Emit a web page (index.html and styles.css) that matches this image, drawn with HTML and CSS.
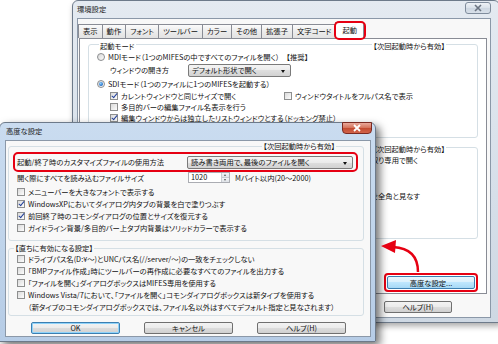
FILE: index.html
```html
<!DOCTYPE html>
<html lang="ja">
<head>
    <meta charset="UTF-8">
    <meta name="viewport" content="width=device-width, initial-scale=1.0">
    <title>高度な設定</title>
    <link rel="stylesheet" href="styles.css">
</head>
<body>
    <!-- 環境設定 (behind) -->
    <div class="window back-win">
        <div class="titlebar">
            <span class="title">環境設定</span>
            <span class="close-btn">
                <svg viewBox="0 0 10 8" width="10" height="8"><path d="M2 1L8 7M8 1L2 7" /></svg>
            </span>
        </div>
        <div class="client">
            <div class="tabs">
                <span class="tab">表示</span>
                <span class="tab">動作</span>
                <span class="tab">フォント</span>
                <span class="tab">ツールバー</span>
                <span class="tab">カラー</span>
                <span class="tab">その他</span>
                <span class="tab">拡張子</span>
                <span class="tab">文字コード</span>
                <span class="tab active marked">起動</span>
            </div>
            <div class="panel">
                <div class="group back-mode">
                    <div class="group-head">
                        <span class="legend">起動モード</span>
                        <span class="legend legend-right">【次回起動時から有効】</span>
                    </div>
                    <div class="row row-radio"><span class="radio"></span>MDIモード（1つのMIFESの中ですべてのファイルを開く）<span class="gap"></span>【推奨】</div>
                    <div class="row row-combo sub">
                        <span class="label-open">ウィンドウの開き方</span>
                        <span class="combo combo-open">デフォルト形状で開く</span>
                    </div>
                    <div class="row row-radio2"><span class="radio on"></span>SDIモード（1つのファイルに1つのMIFESを起動する）</div>
                    <div class="row row-check sub">
                        <span class="check-item"><span class="cb on"></span>カレントウィンドウと同じサイズで開く</span>
                        <span class="cb"></span>ウィンドウタイトルをフルパス名で表示
                    </div>
                    <div class="row row-check sub"><span class="cb"></span>多目的バーの編集ファイル名表示を行う</div>
                    <div class="row row-check sub"><span class="cb on"></span>編集ウィンドウからは独立したリストウィンドウとする（ドッキング禁止）</div>
                </div>

                <div class="group back-open">
                    <div class="group-head">
                        <span class="legend legend-right">【次回起動時から有効】</span>
                    </div>
                    <div class="row tail">編集中のファイルは読み取り専用で開く</div>
                    <div class="row tail tail-4">曖昧な幅の文字を全角と見なす</div>
                </div>

                <span class="hilite">
                    <button class="btn btn-hover">高度な設定...</button>
                </span>
            </div>
            <div class="foot">
                <button class="btn btn-help">ヘルプ(H)</button>
            </div>
        </div>
    </div>

    <!-- 高度な設定 (front) -->
    <div class="window front-win">
        <div class="titlebar">
            <span class="title">高度な設定</span>
            <span class="close-btn red">
                <svg viewBox="0 0 10 8" width="10" height="8"><path d="M2 1L8 7M8 1L2 7" /></svg>
            </span>
        </div>
        <div class="client">
            <div class="group front-next">
                <div class="group-head">
                    <span class="legend legend-right">【次回起動時から有効】</span>
                </div>
                <div class="hilite-row">
                    <div class="row row-combo">
                        <span class="label-grow">起動/終了時のカスタマイズファイルの使用方法</span>
                        <span class="combo combo-custom">読み書き両用で、最後のファイルを開く</span>
                    </div>
                </div>
                <div class="row row-size">
                    <span class="label-size">開く際にすべてを読み込むファイルサイズ</span>
                    <span class="spin">
                        <span class="spin-value">1020</span>
                        <span class="spin-btns"><i class="up"></i><i class="down"></i></span>
                    </span>
                    <span class="unit">Mバイト以内(20～2000)</span>
                </div>
                <div class="row row-check first"><span class="cb"></span>メニューバーを大きなフォントで表示する</div>
                <div class="row row-check"><span class="cb on"></span>WindowsXPにおいてダイアログ内タブの背景を白で塗りつぶす</div>
                <div class="row row-check"><span class="cb on"></span>前回終了時のコモンダイアログの位置とサイズを復元する</div>
                <div class="row row-check"><span class="cb"></span>ガイドライン背景/多目的バー上タブ内背景はソリッドカラーで表示する</div>
            </div>

            <div class="group front-now">
                <div class="group-head">
                    <span class="legend">【直ちに有効になる設定】</span>
                </div>
                <div class="row row-check"><span class="cb"></span>ドライブパス名(D:¥～)とUNCパス名(//server/～)の一致をチェックしない</div>
                <div class="row row-check"><span class="cb"></span>「BMPファイル作成」時にツールバーの再作成に必要なすべてのファイルを出力する</div>
                <div class="row row-check"><span class="cb"></span>「ファイルを開く」ダイアログボックスはMIFES専用を使用する</div>
                <div class="row row-check"><span class="cb"></span>Windows Vista/7において、「ファイルを開く」コモンダイアログボックスは新タイプを使用する</div>
                <div class="row row-check note">（新タイプのコモンダイアログボックスでは、ファイル名以外はすべてデフォルト指定と見なされます）</div>
            </div>

            <div class="buttons">
                <button class="btn btn-default">OK</button>
                <button class="btn">キャンセル</button>
                <button class="btn">ヘルプ(H)</button>
            </div>
        </div>
    </div>

    <svg class="arrow" viewBox="0 0 498 344" width="498" height="344">
        <path class="arrow-line" d="M418 272 C418 257 411 248 393 247" />
        <polygon class="arrow-head" points="381,246 396,240 395,253" />
    </svg>
</body>
</html>
```

FILE: styles.css
```css
* {
    box-sizing: border-box;
}

body {
    margin: 0;
    width: 498px;
    height: 344px;
    overflow: hidden;
    position: relative;
    background: #fff;
    font-family: "Noto Sans CJK JP", "Noto Sans", sans-serif;
    font-size: 7.3px;
    font-feature-settings: "palt";
    color: #111;
    white-space: nowrap;
}

/* windows */
.window {
    position: absolute;
    display: flex;
    flex-direction: column;
    border: 1px solid #6d7a8a;
    border-radius: 6px 6px 0 0;
}

.back-win {
    left: 72px;
    top: 0;
    width: 428px;
    height: 323px;
    background: linear-gradient(#e4eaf1, #d6dfe9 60%, #ced8e3);
    box-shadow: 2px 3px 6px rgba(0, 0, 0, 0.35);
}

.front-win {
    left: -1px;
    top: 122px;
    width: 377px;
    height: 220px;
    background: linear-gradient(#cadcf0, #bed3ea 60%, #b6cce6);
    box-shadow: 4px 4px 8px rgba(0, 0, 0, 0.55);
}

.titlebar {
    flex: none;
    height: 17px;
    display: flex;
    align-items: flex-start;
}

.title {
    padding: 4px 0 0 4px;
    line-height: 9px;
    color: #1e1e1e;
}

.front-win .title {
    padding-left: 6px;
}

.close-btn {
    margin: 1px 8px 0 auto;
    width: 26px;
    height: 12px;
    border: 1px solid #7f8c9c;
    border-radius: 3px;
    background: linear-gradient(#eef2f6, #d9e1ea 50%, #ccd6e1 50%, #d8e0e9);
    display: flex;
    align-items: center;
    justify-content: center;
}

.close-btn svg path {
    stroke: #6b7481;
    stroke-width: 1.6;
}

.close-btn.red {
    margin: -1px 3px 0 auto;
    width: 30px;
    height: 12px;
    border-color: #7a2a22;
    border-radius: 0 0 4px 4px;
    background: linear-gradient(#e9a99b, #d6765f 45%, #c24a30 50%, #d2644a);
}

.close-btn.red svg path {
    stroke: #fff;
    stroke-width: 1.8;
}

.client {
    --face: #f8f8f8;
    flex: 1;
    display: flex;
    flex-direction: column;
    border: 1px solid #8b98a8;
    background: var(--face);
}

.back-win .client {
    margin: 0 8px 4px 4px;
    padding-top: 3px;
}

.front-win .client {
    margin: 0 4px 4px 5px;
    padding: 5px 6px 0 2px;
}

/* tabs */
.tabs {
    display: flex;
    align-items: flex-end;
    height: 16px;
}

.tab {
    position: relative;
    height: 14px;
    line-height: 12px;
    padding: 0 4px;
    margin-right: -1px;
    border: 1px solid #898c95;
    border-bottom: none;
    background: linear-gradient(#fbfbfb, #ececec 50%, #e2e2e2);
}

.tab.active {
    height: 17px;
    margin-bottom: -1px;
    padding: 1px 6px 0;
    background: #fff;
    z-index: 1;
}

.tab.marked::after {
    content: '';
    position: absolute;
    inset: -2px -3px -1px -2px;
    border: 2px solid #e60012;
    border-radius: 5px;
}

.panel {
    --face: #fff;
    height: 256px;
    margin: 0 3px 0 1px;
    padding: 5px 8px 1px 8px;
    border: 1px solid #898c95;
    background: var(--face);
    display: flex;
    flex-direction: column;
}

.foot {
    display: flex;
    justify-content: flex-end;
    padding: 7px 38px 0 0;
}

/* group boxes */
.group {
    border: 1px solid #d5dfe5;
    border-radius: 3px;
}

.group-head {
    display: flex;
    height: 9px;
    line-height: 9px;
    margin-top: -5px;
    padding: 0 31px 0 2px;
}

.legend {
    padding: 0 1px;
    background: var(--face);
}

.legend-right {
    margin-left: auto;
}

.row {
    display: flex;
    align-items: center;
    height: 12px;
}

.gap {
    width: 7px;
}

/* back window rows */
.back-mode {
    padding: 2px 0 14px 8px;
}

.back-mode .sub {
    padding-left: 13px;
}

.back-mode .row-combo {
    height: 14px;
}

.back-mode .row-radio2 {
    height: 13px;
}

.back-mode .row-check {
    height: 11px;
}

.label-open {
    width: 78px;
}

.check-item {
    display: flex;
    align-items: center;
    width: 174px;
}

.back-open {
    margin-top: 9px;
    padding: 2px 0 36px 0;
}

.tail {
    justify-content: flex-end;
    padding-right: 59px;
}

.tail-4 {
    margin-top: 24px;
    padding-right: 57px;
}

.hilite {
    margin-top: auto;
    align-self: flex-end;
    padding: 1px;
    border: 2px solid #e60012;
    border-radius: 4px;
    display: flex;
}

/* front window rows */
.front-next {
    padding-bottom: 6px;
}

.front-next .group-head {
    padding-right: 27px;
}

.hilite-row {
    margin: 1px 5px 0 4px;
    padding: 1px 3px 1px 2px;
    border: 2px solid #e60012;
    border-radius: 5px;
}

.hilite-row .row {
    height: 14px;
}

.label-grow {
    flex: 1;
}

.row-size {
    height: 11px;
    margin-left: 8px;
}

.label-size {
    width: 171px;
}

.front-win .row-check {
    margin-left: 8px;
}

.front-win .row-check.first {
    margin-top: 3px;
}

.front-now {
    margin-top: 7px;
    padding-bottom: 2px;
}

.front-now .group-head {
    padding-left: 5px;
}

.row.note {
    padding-left: 11px;
}

.buttons {
    display: flex;
    gap: 24px;
    margin-top: 6px;
    padding-left: 23px;
}

/* controls */
.radio {
    position: relative;
    flex: none;
    width: 8px;
    height: 8px;
    margin-right: 3px;
    border: 1px solid #8c8e90;
    border-radius: 50%;
    background: linear-gradient(135deg, #d8d8d8, #fbfbfb);
}

.radio.on::after {
    content: '';
    position: absolute;
    left: 1px;
    top: 1px;
    width: 4px;
    height: 4px;
    border-radius: 50%;
    background: radial-gradient(circle at 40% 35%, #8fd0ff, #1e6bc4 70%);
}

.cb {
    position: relative;
    flex: none;
    width: 8px;
    height: 8px;
    margin-right: 3px;
    border: 1px solid #8e8f8f;
    background: linear-gradient(135deg, #dadada, #fdfdfd);
}

.cb.on::after {
    content: '';
    position: absolute;
    left: 2px;
    top: -1px;
    width: 2px;
    height: 5px;
    border: solid #23409a;
    border-width: 0 1.5px 1.5px 0;
    transform: rotate(40deg);
}

.combo {
    position: relative;
    height: 13px;
    line-height: 11px;
    padding: 0 12px 0 3px;
    border: 1px solid #7a7a7a;
    border-radius: 2px;
    background: linear-gradient(#f4f4f4, #ebebeb 50%, #dedede 50%, #d2d2d2);
}

.combo::after {
    content: '';
    position: absolute;
    right: 5px;
    top: 5px;
    border: 2.5px solid transparent;
    border-top: 3px solid #111;
    border-bottom: none;
}

.combo-open {
    width: 103px;
}

.combo-custom {
    width: 166px;
}

.spin {
    display: flex;
    height: 11px;
    width: 42px;
    border: 1px solid #abadb3;
    background: #fff;
}

.spin-value {
    flex: 1;
    padding-left: 2px;
    line-height: 9px;
}

.spin-btns {
    width: 8px;
    display: flex;
    flex-direction: column;
    border-left: 1px solid #c8ccd2;
}

.spin-btns i {
    flex: 1;
    position: relative;
    background: linear-gradient(#f2f4f7, #dfe3e8);
}

.spin-btns i.up {
    border-bottom: 1px solid #c8ccd2;
}

.spin-btns i::after {
    content: '';
    position: absolute;
    left: 2px;
    top: 1px;
    border: 1.5px solid transparent;
}

.spin-btns i.up::after {
    border-bottom: 2px solid #555;
    border-top: none;
}

.spin-btns i.down::after {
    border-top: 2px solid #555;
    border-bottom: none;
}

.unit {
    margin-left: 5px;
}

.btn {
    width: 89px;
    height: 12px;
    padding: 0;
    font: inherit;
    line-height: 10px;
    color: #111;
    border: 1px solid #707070;
    border-radius: 2px;
    background: linear-gradient(#f3f3f3, #ebebeb 50%, #dddddd 50%, #d0d0d0);
}

.btn-help {
    width: 68px;
}

.btn-hover {
    width: 88px;
    height: 13px;
    border-color: #3c7fb1;
    background: linear-gradient(#eaf6fd, #d9f0fc 50%, #bee6fd 50%, #a7d9f5);
}

.btn-default {
    border-color: #3c7fb1;
    box-shadow: inset 0 0 0 1px #8fd3fa;
}

/* red arrow */
.arrow {
    position: absolute;
    left: 0;
    top: 0;
    pointer-events: none;
}

.arrow-line {
    fill: none;
    stroke: #e60012;
    stroke-width: 2.5;
}

.arrow-head {
    fill: #e60012;
}
```
